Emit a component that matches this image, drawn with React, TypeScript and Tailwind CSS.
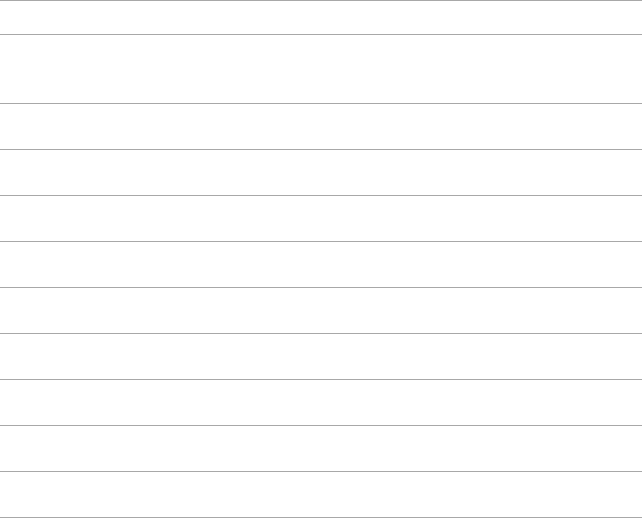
import React from "react";

export default function App() {
    const rows = Array.from({ length: 9 });

    return (
        <div className="w-[642px] h-[518px] bg-white overflow-hidden font-['Liberation_Sans',sans-serif]">
            {/* Table-like ruled rows */}
            <div className="border-t border-[#a8a8a8]">
                <div className="h-[34px] border-b border-[#a8a8a8]" />
                <div className="h-[69px] border-b border-[#a8a8a8]" />
                {rows.map((_, i) => (
                    <div key={i} className="h-[46px] border-b border-[#a8a8a8]" />
                ))}
            </div>
        </div>
    );
}
